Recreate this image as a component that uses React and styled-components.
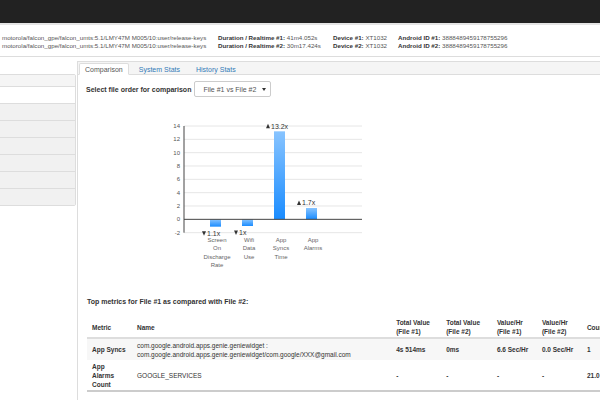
import React from 'react';
import styled, { createGlobalStyle } from 'styled-components';

const GlobalStyle = createGlobalStyle`
  html, body {
    margin: 0;
    padding: 0;
    background: #fff;
    overflow: hidden;
  }
  body {
    width: 600px;
    height: 400px;
    font-family: "Liberation Sans", Arial, sans-serif;
    font-size: 7px;
    color: #333;
  }
`;

const info = [
  {
    build: 'motorola/falcon_gpe/falcon_umts:5.1/LMY47M M005/10:user/release-keys',
    duration: '41m4.052s',
    device: 'XT1032',
    androidId: '3888489459178755296',
  },
  {
    build: 'motorola/falcon_gpe/falcon_umts:5.1/LMY47M M005/10:user/release-keys',
    duration: '30m17.424s',
    device: 'XT1032',
    androidId: '3888489459178755296',
  },
];

// chart geometry, in page pixels
const Y_TOP = 125;
const STEP = 13.333;
const ZERO = Y_TOP + STEP * 7;
const bars = [
  { x: 210, value: -1.1, label: ['Screen', 'On', 'Discharge', 'Rate'], ratio: '1.1x', up: false, tx: 202 },
  { x: 242, value: -1, label: ['Wifi', 'Data', 'Use'], ratio: '1x', up: false, tx: 234 },
  { x: 274, value: 13.2, label: ['App', 'Syncs', 'Time'], ratio: '13.2x', up: true, tx: 266 },
  { x: 306, value: 1.7, label: ['App', 'Alarms'], ratio: '1.7x', up: true, tx: 297 },
];

const rows = [
  {
    metric: 'App Syncs',
    name: ['com.google.android.apps.genie.geniewidget :', 'com.google.android.apps.genie.geniewidget/com.google/XXX@gmail.com'],
    values: ['4s 514ms', '0ms', '6.6 Sec/Hr', '0.0 Sec/Hr', '1'],
  },
  {
    metric: 'App Alarms Count',
    name: ['GOOGLE_SERVICES'],
    values: ['-', '-', '-', '-', '21.0'],
  },
];

const columns = [
  { title: 'Metric', width: 45 },
  { title: 'Name', width: 259 },
  { title: 'Total Value (File #1)', width: 50 },
  { title: 'Total Value (File #2)', width: 50.7 },
  { title: 'Value/Hr (File #1)', width: 45 },
  { title: 'Value/Hr (File #2)', width: 45 },
  { title: 'Count (File #1)', width: 60 },
];

function Chart() {
  const ticks = [14, 12, 10, 8, 6, 4, 2, 0, -2];
  return (
    <ChartSvg width="220" height="165" viewBox="160 110 220 165">
      <defs>
        <linearGradient id="barFill" x1="0" y1="0" x2="0" y2="1">
          <stop offset="0" stopColor="#88c4ff" />
          <stop offset="1" stopColor="#1a8cff" />
        </linearGradient>
      </defs>
      {ticks.map((t, i) => {
        const y = Y_TOP + STEP * i;
        return (
          <g key={t}>
            {t !== 0 && <line x1="184" x2="362" y1={y} y2={y} stroke="#e6e6e6" strokeWidth="1" />}
            <text x="180" y={y + 2} textAnchor="end" fontSize="6" fill="#555">{t}</text>
          </g>
        );
      })}
      {bars.map((b) => {
        const h = Math.abs(b.value) * (STEP / 2);
        const y = b.value >= 0 ? ZERO - h : ZERO;
        const ty = b.up ? y - 5 : ZERO + h + 7;
        const cx = b.x + 7;
        return (
          <g key={b.x}>
            <rect x={b.x} y={y} width="11" height={h} fill="url(#barFill)" />
            {b.up ? (
              <polygon points={`${b.tx},${ty + 2} ${b.tx + 4},${ty + 2} ${b.tx + 2},${ty - 2.5}`} fill="#333" />
            ) : (
              <polygon points={`${b.tx},${ty - 2.5} ${b.tx + 4},${ty - 2.5} ${b.tx + 2},${ty + 2}`} fill="#333" />
            )}
            <text x={b.tx + 5} y={ty + 2.5} fontSize="7" fill="#333">{b.ratio}</text>
            {b.label.map((l, i) => (
              <text key={l + i} x={cx} y={241 + i * 8.33} textAnchor="middle" fontSize="6" fill="#666">{l}</text>
            ))}
          </g>
        );
      })}
      <line x1="184" x2="362" y1={ZERO} y2={ZERO} stroke="#444" strokeWidth="1" />
      <line x1="184" x2="184" y1={Y_TOP} y2={Y_TOP + STEP * 8} stroke="#444" strokeWidth="1" />
    </ChartSvg>
  );
}

export default function App() {
  return (
    <>
      <GlobalStyle />
      <Navbar />
      <InfoBar>
        {info.map((f, i) => (
          <InfoRow key={i}>
            <Value>{f.build}</Value>
            <span><Label>Duration / Realtime #{i + 1}:</Label> <Value>{f.duration}</Value></span>
            <span><Label>Device #{i + 1}:</Label> <Value>{f.device}</Value></span>
            <span><Label>Android ID #{i + 1}:</Label> <Value>{f.androidId}</Value></span>
          </InfoRow>
        ))}
      </InfoBar>
      <Body>
        <Sidebar>
          <SideHeading />
          <SideItem $active />
          {[0, 1, 2, 3, 4, 5].map((n) => <SideItem key={n} />)}
        </Sidebar>
        <Main>
          <TabBar>
            <Tab $active>Comparison</Tab>
            <Tab>System Stats</Tab>
            <Tab>History Stats</Tab>
          </TabBar>
          <Content>
            <SelectRow>
              <Strong>Select file order for comparison</Strong>
              <SelectBox>
                File #1 vs File #2
                <Caret />
              </SelectBox>
            </SelectRow>
            <Chart />
            <SectionTitle>Top metrics for File #1 as compared with File #2:</SectionTitle>
            <Table>
              <colgroup>
                {columns.map((c) => <col key={c.title} style={{ width: c.width }} />)}
              </colgroup>
              <thead>
                <tr>
                  {columns.map((c) => <Th key={c.title}>{c.title}</Th>)}
                </tr>
              </thead>
              <tbody>
                {rows.map((r, i) => (
                  <Tr key={r.metric} $striped={i === 0}>
                    <Td $bold>{r.metric}</Td>
                    <Td>{r.name.map((n) => <div key={n}>{n}</div>)}</Td>
                    {r.values.map((v, j) => <Td key={j} $bold>{v}</Td>)}
                  </Tr>
                ))}
              </tbody>
            </Table>
          </Content>
        </Main>
      </Body>
    </>
  );
}

const Navbar = styled.div`
  height: 23px;
  background: #222;
  border-bottom: 2px solid #e4e4e4;
`;

const InfoBar = styled.div`
  box-sizing: border-box;
  height: 32px;
  padding: 9px 0 0 2px;
  border-bottom: 1px solid #ddd;
  font-size: 6.2px;
`;

const InfoRow = styled.div`
  display: grid;
  grid-template-columns: 216px 115px 65px auto;
  line-height: 8px;
  white-space: nowrap;
`;

const Label = styled.b`
  color: #333;
`;

const Value = styled.span`
  color: #555;
`;

const Body = styled.div`
  display: flex;
  margin-top: 4px;
`;

const Sidebar = styled.div`
  align-self: flex-start;
  width: 76px;
  margin: 13px 0 0 -2px;
  border: 1px solid #ddd;
  border-radius: 0 2px 2px 0;
  overflow: hidden;
`;

const SideHeading = styled.div`
  height: 11px;
  background: #f5f5f5;
  border-bottom: 1px solid #ddd;
`;

const SideItem = styled.div`
  height: 16px;
  background: ${(p) => (p.$active ? '#fff' : '#f1f1f1')};
  border-bottom: 1px solid #ddd;
  &:last-child {
    border-bottom: none;
  }
`;

const Main = styled.div`
  flex: 1;
  min-width: 0;
  min-height: 339px;
  margin-left: 1px;
  border-left: 1px solid #ddd;
  overflow: hidden;
`;

const TabBar = styled.div`
  box-sizing: border-box;
  display: flex;
  align-items: flex-end;
  height: 14px;
  padding-left: 1px;
  background: #f5f5f5;
  border-top: 1px solid #ddd;
  border-bottom: 1px solid #ddd;
`;

const Tab = styled.div`
  box-sizing: border-box;
  height: 12px;
  line-height: 11px;
  padding: 0 5px;
  margin-right: 4px;
  margin-bottom: -1px;
  color: ${(p) => (p.$active ? '#555' : '#337ab7')};
  background: ${(p) => (p.$active ? '#fff' : 'transparent')};
  border: 1px solid ${(p) => (p.$active ? '#ddd' : 'transparent')};
  border-bottom-color: transparent;
  border-radius: 2px 2px 0 0;
`;

const Content = styled.div`
  padding: 6px 0 0 8px;
`;

const SelectRow = styled.div`
  display: flex;
  align-items: center;
  height: 16px;
`;

const Strong = styled.b`
  color: #333;
`;

const SelectBox = styled.div`
  box-sizing: border-box;
  display: flex;
  align-items: center;
  justify-content: space-between;
  width: 77px;
  height: 16px;
  margin-left: 3px;
  padding: 0 4px 0 8px;
  color: #555;
  border: 1px solid #ccc;
  border-radius: 2px;
`;

const Caret = styled.span`
  width: 0;
  height: 0;
  border-left: 2px solid transparent;
  border-right: 2px solid transparent;
  border-top: 3px solid #333;
`;

const ChartSvg = styled.svg`
  display: block;
  margin: 14px 0 0 74px;
  font-family: "Liberation Sans", Arial, sans-serif;
`;

const SectionTitle = styled.div`
  margin: 22px 0 0 1px;
  line-height: 8px;
  font-weight: bold;
  color: #333;
`;

const Table = styled.table`
  table-layout: fixed;
  width: 555px;
  margin: 10px 0 0 1px;
  border-collapse: collapse;
  font-size: 6.5px;
  line-height: 9px;
  border-bottom: 2px solid #ccc;
`;

const Th = styled.th`
  padding: 2px 6px 1px 5px;
  text-align: left;
  vertical-align: middle;
  color: #333;
  border-bottom: 2px solid #ddd;
`;

const Tr = styled.tr`
  background: ${(p) => (p.$striped ? '#f7f7f7' : '#fff')};
`;

const Td = styled.td`
  padding: 1.5px 6px 1.5px 5px;
  vertical-align: middle;
  font-weight: ${(p) => (p.$bold ? 'bold' : 'normal')};
  color: #333;
`;
